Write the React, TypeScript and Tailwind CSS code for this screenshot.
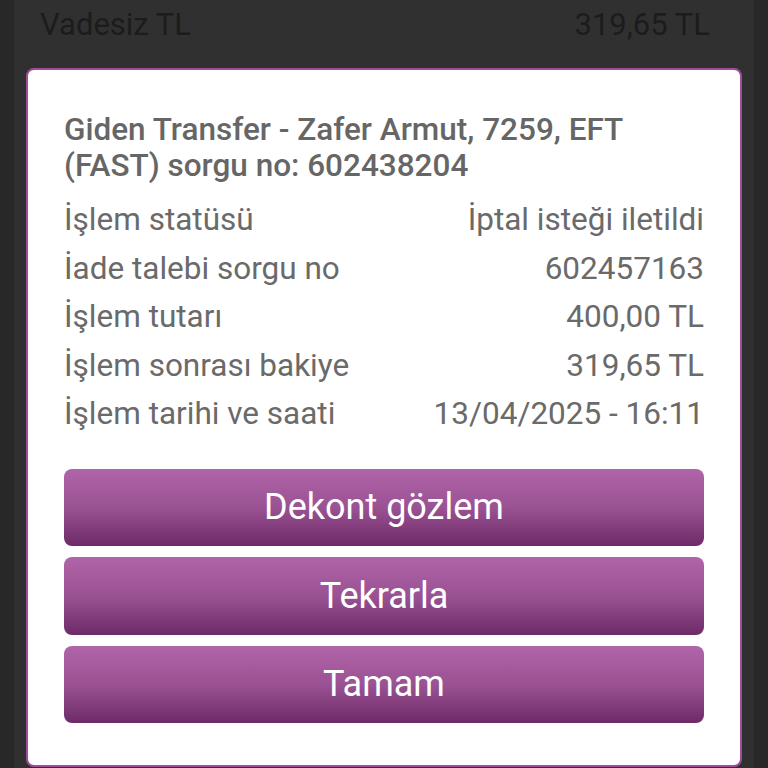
const ROWS: [string, string][] = [
  ["İşlem statüsü", "İptal isteği iletildi"],
  ["İade talebi sorgu no", "602457163"],
  ["İşlem tutarı", "400,00 TL"],
  ["İşlem sonrası bakiye", "319,65 TL"],
  ["İşlem tarihi ve saati", "13/04/2025 - 16:11"],
]

const ACTIONS = ["Dekont gözlem", "Tekrarla", "Tamam"]

export default function App() {
  return (
    <div className="relative h-[768px] w-[768px] overflow-hidden bg-[#282828] font-['Roboto',sans-serif]">
      {/* Dimmed page behind the dialog */}
      <div className="mx-[14px] h-full bg-[#303030]">
        <div className="flex items-center justify-between pl-[26px] pr-[44px] pt-[4px] text-[31px] leading-[42px] text-[#1c1c1c]">
          <span>Vadesiz TL</span>
          <span>319,65 TL</span>
        </div>
      </div>

      {/* Dialog */}
      <div className="absolute left-[26px] top-[68px] w-[716px] rounded-[8px] border-2 border-[#9c4f97] bg-white px-[36px] pt-[42px] pb-[42px]">
        <h2 className="text-[31.5px] font-medium leading-[36px] text-[#666666]">
          Giden Transfer - Zafer Armut, 7259, EFT (FAST) sorgu no: 602438204
        </h2>

        <div className="mt-[12px] flex flex-col">
          {ROWS.map(([label, value]) => (
            <div
              key={label}
              className="flex items-center justify-between text-[31.5px] leading-[48.5px] text-[#6a6a6a]"
            >
              <span>{label}</span>
              <span>{value}</span>
            </div>
          ))}
        </div>

        <div className="mt-[30px] flex flex-col gap-[11px]">
          {ACTIONS.map((label) => (
            <button
              key={label}
              className="flex h-[77.5px] items-center justify-center rounded-[8px] bg-gradient-to-b from-[#b064a9] via-[#9a5293] to-[#6e2a68] text-[36px] text-white"
            >
              {label}
            </button>
          ))}
        </div>
      </div>
    </div>
  )
}
